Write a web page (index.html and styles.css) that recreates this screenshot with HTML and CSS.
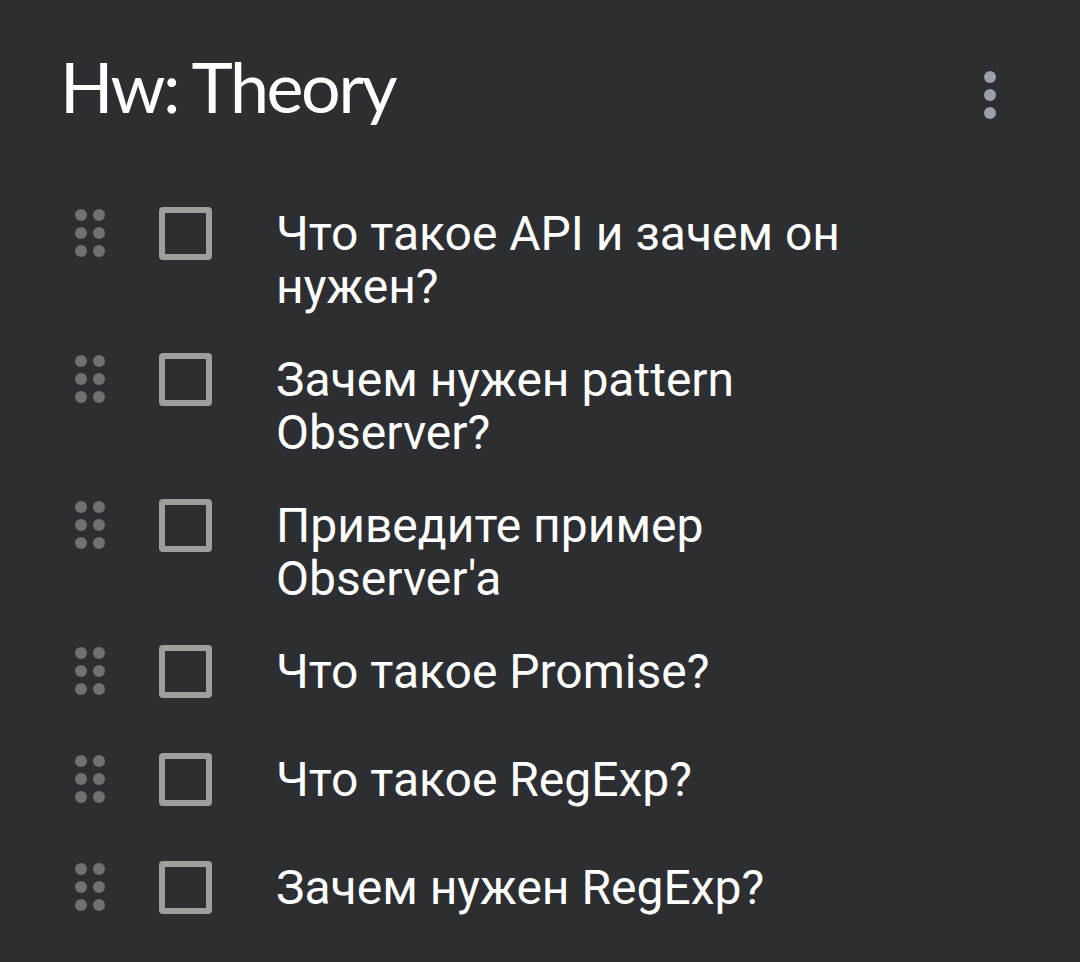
FILE: index.html
```html
<!DOCTYPE html>
<html lang="ru">
<head>
<meta charset="utf-8">
<title>Hw: Theory</title>
<link rel="stylesheet" href="styles.css">
</head>
<body>
<div class="note">
  <header class="note-header">
    <h1 class="note-title">Hw: Theory</h1>
    <svg class="kebab" width="24" height="54" viewBox="0 0 24 54">
      <circle cx="12" cy="9" r="6"/>
      <circle cx="12" cy="27" r="6"/>
      <circle cx="12" cy="45" r="6"/>
    </svg>
  </header>
  <ul class="list">
    <li class="item">
      <span class="cell"><svg class="handle" width="36" height="53" viewBox="0 0 36 53"><circle cx="9" cy="8" r="6"/><circle cx="27" cy="8" r="6"/><circle cx="9" cy="26" r="6"/><circle cx="27" cy="26" r="6"/><circle cx="9" cy="44" r="6"/><circle cx="27" cy="44" r="6"/></svg></span>
      <span class="cell"><span class="box"></span></span>
      <span class="text">Что такое API и зачем он нужен?</span>
    </li>
    <li class="item">
      <span class="cell"><svg class="handle" width="36" height="53" viewBox="0 0 36 53"><circle cx="9" cy="8" r="6"/><circle cx="27" cy="8" r="6"/><circle cx="9" cy="26" r="6"/><circle cx="27" cy="26" r="6"/><circle cx="9" cy="44" r="6"/><circle cx="27" cy="44" r="6"/></svg></span>
      <span class="cell"><span class="box"></span></span>
      <span class="text">Зачем нужен pattern Observer?</span>
    </li>
    <li class="item">
      <span class="cell"><svg class="handle" width="36" height="53" viewBox="0 0 36 53"><circle cx="9" cy="8" r="6"/><circle cx="27" cy="8" r="6"/><circle cx="9" cy="26" r="6"/><circle cx="27" cy="26" r="6"/><circle cx="9" cy="44" r="6"/><circle cx="27" cy="44" r="6"/></svg></span>
      <span class="cell"><span class="box"></span></span>
      <span class="text">Приведите пример Observer'a</span>
    </li>
    <li class="item">
      <span class="cell"><svg class="handle" width="36" height="53" viewBox="0 0 36 53"><circle cx="9" cy="8" r="6"/><circle cx="27" cy="8" r="6"/><circle cx="9" cy="26" r="6"/><circle cx="27" cy="26" r="6"/><circle cx="9" cy="44" r="6"/><circle cx="27" cy="44" r="6"/></svg></span>
      <span class="cell"><span class="box"></span></span>
      <span class="text">Что такое Promise?</span>
    </li>
    <li class="item">
      <span class="cell"><svg class="handle" width="36" height="53" viewBox="0 0 36 53"><circle cx="9" cy="8" r="6"/><circle cx="27" cy="8" r="6"/><circle cx="9" cy="26" r="6"/><circle cx="27" cy="26" r="6"/><circle cx="9" cy="44" r="6"/><circle cx="27" cy="44" r="6"/></svg></span>
      <span class="cell"><span class="box"></span></span>
      <span class="text">Что такое RegExp?</span>
    </li>
    <li class="item">
      <span class="cell"><svg class="handle" width="36" height="53" viewBox="0 0 36 53"><circle cx="9" cy="8" r="6"/><circle cx="27" cy="8" r="6"/><circle cx="9" cy="26" r="6"/><circle cx="27" cy="26" r="6"/><circle cx="9" cy="44" r="6"/><circle cx="27" cy="44" r="6"/></svg></span>
      <span class="cell"><span class="box"></span></span>
      <span class="text">Зачем нужен RegExp?</span>
    </li>
  </ul>
</div>
</body>
</html>
```
FILE: styles.css
```css
html, body {
  margin: 0;
  padding: 0;
  background: #2d2e31;
}
body {
  width: 1080px;
  height: 962px;
  overflow: hidden;
  font-family: Roboto, "Noto Sans", sans-serif;
  color: #ffffff;
}
.note {
  display: flex;
  flex-direction: column;
}
.note-header {
  display: flex;
  justify-content: space-between;
  align-items: flex-start;
  padding: 51px 78px 0 60px;
  height: 136px;
  box-sizing: border-box;
}
.note-title {
  margin: 0;
  font-family: Lato, "Open Sans", sans-serif;
  font-weight: 400;
  font-size: 70px;
  line-height: 70px;
  letter-spacing: -2.4px;
  color: #ffffff;
}
.kebab {
  fill: #9aa0a6;
  margin-top: 17px;
}
.list {
  list-style: none;
  margin: 0;
  padding: 0;
  margin-top: 51px;
}
.item {
  display: flex;
  align-items: flex-start;
  min-height: 108px;
  box-sizing: border-box;
  padding: 20px 200px 20px 72px;
}
.cell {
  height: 53px;
  display: flex;
  align-items: center;
  flex: none;
}
.handle {
  fill: #6f7175;
  display: block;
}
.cell + .cell {
  margin-left: 51px;
}
.box {
  display: block;
  width: 53px;
  height: 53px;
  box-sizing: border-box;
  border: 6px solid #9e9e9e;
  border-radius: 4px;
}
.text {
  margin-left: 64px;
  font-size: 48px;
  line-height: 53px;
  flex: 1;
  color: #ffffff;
}
```
